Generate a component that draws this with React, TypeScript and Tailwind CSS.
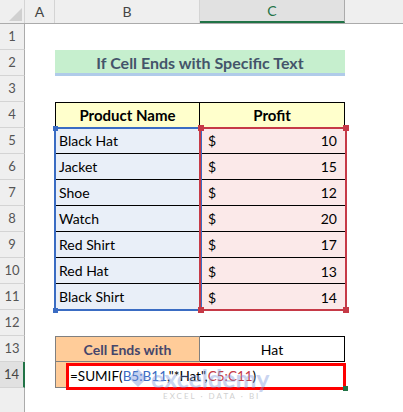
import React from "react";

const products = [
  { name: "Black Hat", profit: 10 },
  { name: "Jacket", profit: 15 },
  { name: "Shoe", profit: 12 },
  { name: "Watch", profit: 20 },
  { name: "Red Shirt", profit: 17 },
  { name: "Red Hat", profit: 13 },
  { name: "Black Shirt", profit: 14 },
];

function RowHead({ n, active }: { n?: number; active?: boolean }) {
  return (
    <div className={`flex w-[25px] shrink-0 items-center justify-center border-b border-[#d4d4d4] text-[13px] ${active ? "border-r-2 border-r-[#217346] bg-[#e1e1e1] text-[#444]" : "border-r border-r-[#ababab] bg-[#efefef] text-[#555]"}`}>
      {n}
    </div>
  );
}

export default function App() {
  return (
    <div className="relative h-[412px] w-[403px] overflow-hidden bg-white text-black" style={{ fontFamily: "Lato, 'Noto Sans', sans-serif" }}>
      {/* column headers */}
      <div className="flex h-[24px] border-b border-[#ababab] bg-[#efefef] text-[14px] text-[#444]">
        <div className="flex w-[25px] shrink-0 items-end justify-end border-r border-[#d4d4d4] p-[2px]">
          <svg width="13" height="13" viewBox="0 0 13 13"><polygon points="13,0 13,13 0,13" fill="#d0d0d0" /></svg>
        </div>
        <div className="flex w-[30px] shrink-0 items-center justify-center border-r border-[#d4d4d4]">A</div>
        <div className="flex w-[145px] shrink-0 items-center justify-center border-r border-[#d4d4d4]">B</div>
        <div className="flex w-[145px] shrink-0 items-center justify-center border-b-2 border-r border-b-[#217346] border-r-[#ababab] bg-[#e1e1e1] text-[#217346]">C</div>
        <div className="flex-1" />
      </div>

      {/* row 1 */}
      <div className="flex h-[26px]"><RowHead n={1} /></div>

      {/* row 2 title */}
      <div className="flex h-[26px]">
        <RowHead n={2} />
        <div className="w-[30px] shrink-0" />
        <div className="flex w-[290px] shrink-0 items-center justify-center border-b-[3px] border-[#b0cbe9] bg-[#c6efce] pt-[2px] text-[16px] font-bold text-[#44546a]">
          If Cell Ends with Specific Text
        </div>
      </div>

      {/* row 3 */}
      <div className="flex h-[26px]"><RowHead n={3} /></div>

      {/* row 4 table header */}
      <div className="flex h-[26px]">
        <RowHead n={4} />
        <div className="w-[30px] shrink-0" />
        <div className="flex w-[145px] shrink-0 items-center justify-center border border-black bg-[#ffffcc] text-[15px] font-bold">Product Name</div>
        <div className="flex w-[145px] shrink-0 items-center justify-center border-y border-r border-black bg-[#ffffcc] text-[15px] font-bold">Profit</div>
      </div>

      {/* rows 5-11 */}
      {products.map((p, i) => {
        const low = i >= 5;
        return (
          <div key={p.name} className="flex h-[26px]">
            <RowHead n={i + 5} />
            <div className="w-[30px] shrink-0" />
            <div className={`flex w-[145px] shrink-0 border-b border-black bg-[#e9eff8] pl-[4px] text-[14px] ${low ? "items-start pt-[2px]" : "items-center"}`}>{p.name}</div>
            <div className={`flex w-[145px] shrink-0 justify-between border-b border-black bg-[#fbe9e9] pl-[8px] pr-[8px] text-[14px] ${low ? "items-end pb-[1px]" : "items-center"}`}>
              <span>$</span>
              <span>{p.profit}</span>
            </div>
          </div>
        );
      })}

      {/* row 12 */}
      <div className="flex h-[26px]"><RowHead n={12} /></div>

      {/* row 13 */}
      <div className="flex h-[26px]">
        <RowHead n={13} />
        <div className="w-[30px] shrink-0" />
        <div className="flex w-[145px] shrink-0 items-center justify-center border border-[#808080] bg-[#ffcc99] text-[14px] font-bold text-[#45466c]">Cell Ends with</div>
        <div className="flex w-[145px] shrink-0 items-center justify-center border-y border-r border-black text-[14px]">Hat</div>
      </div>

      {/* row 14 */}
      <div className="flex h-[26px]">
        <RowHead n={14} active />
        <div className="w-[30px] shrink-0" />
        <div className="w-[145px] shrink-0 border-b border-l border-[#808080] bg-[#ffcc99]" />
        <div className="w-[145px] shrink-0 border-b border-[#808080]" />
      </div>

      {/* row 15 */}
      <div className="flex h-[26px]"><RowHead /></div>

      {/* range highlights */}
      <div className="absolute left-[54px] top-[127px] h-[184px] w-[148px] border-2 border-[#3a6cc3]" />
      <div className="absolute left-[199px] top-[127px] h-[184px] w-[148px] border-2 border-[#c63a47]" />
      <div className="absolute left-[53px] top-[126px] size-[5px] bg-[#3a6cc3]" />
      <div className="absolute left-[53px] top-[308px] size-[5px] bg-[#3a6cc3]" />
      <div className="absolute left-[198px] top-[125px] size-[6px] bg-[#c63a47]" />
      <div className="absolute left-[343px] top-[125px] size-[6px] bg-[#c63a47]" />
      <div className="absolute left-[198px] top-[307px] size-[6px] bg-[#c63a47]" />
      <div className="absolute left-[343px] top-[307px] size-[6px] bg-[#c63a47]" />

      {/* formula edit box */}
      <div className="absolute left-[66px] top-[363px] flex h-[27px] w-[280px] items-center border-[3px] border-[#ff0000] bg-white pl-[1px] text-[13.5px]">
        <span>=SUMIF(</span>
        <span className="text-[#3a6cc3]">B5:B11</span>
        <span>,"*Hat",</span>
        <span className="text-[#c63a47]">C5:C11</span>
        <span>)</span>
      </div>
      <div className="absolute left-[343px] top-[386px] size-[5px] bg-[#217346]" />

      {/* watermark */}
      <div className="pointer-events-none absolute left-[128px] top-[366px] flex flex-col items-center opacity-40">
        <div className="flex items-center gap-[3px]">
          <svg width="20" height="20" viewBox="0 0 22 22"><path d="M11 1 L21 11 L11 21 L1 11 Z" fill="#6f8fd8" /></svg>
          <span className="text-[25px] font-bold leading-[24px] text-[#7b96dc]">exceldemy</span>
        </div>
        <span className="ml-[26px] text-[8px] tracking-[2px] text-[#8a8a8a]">EXCEL · DATA · BI</span>
      </div>
    </div>
  );
}
